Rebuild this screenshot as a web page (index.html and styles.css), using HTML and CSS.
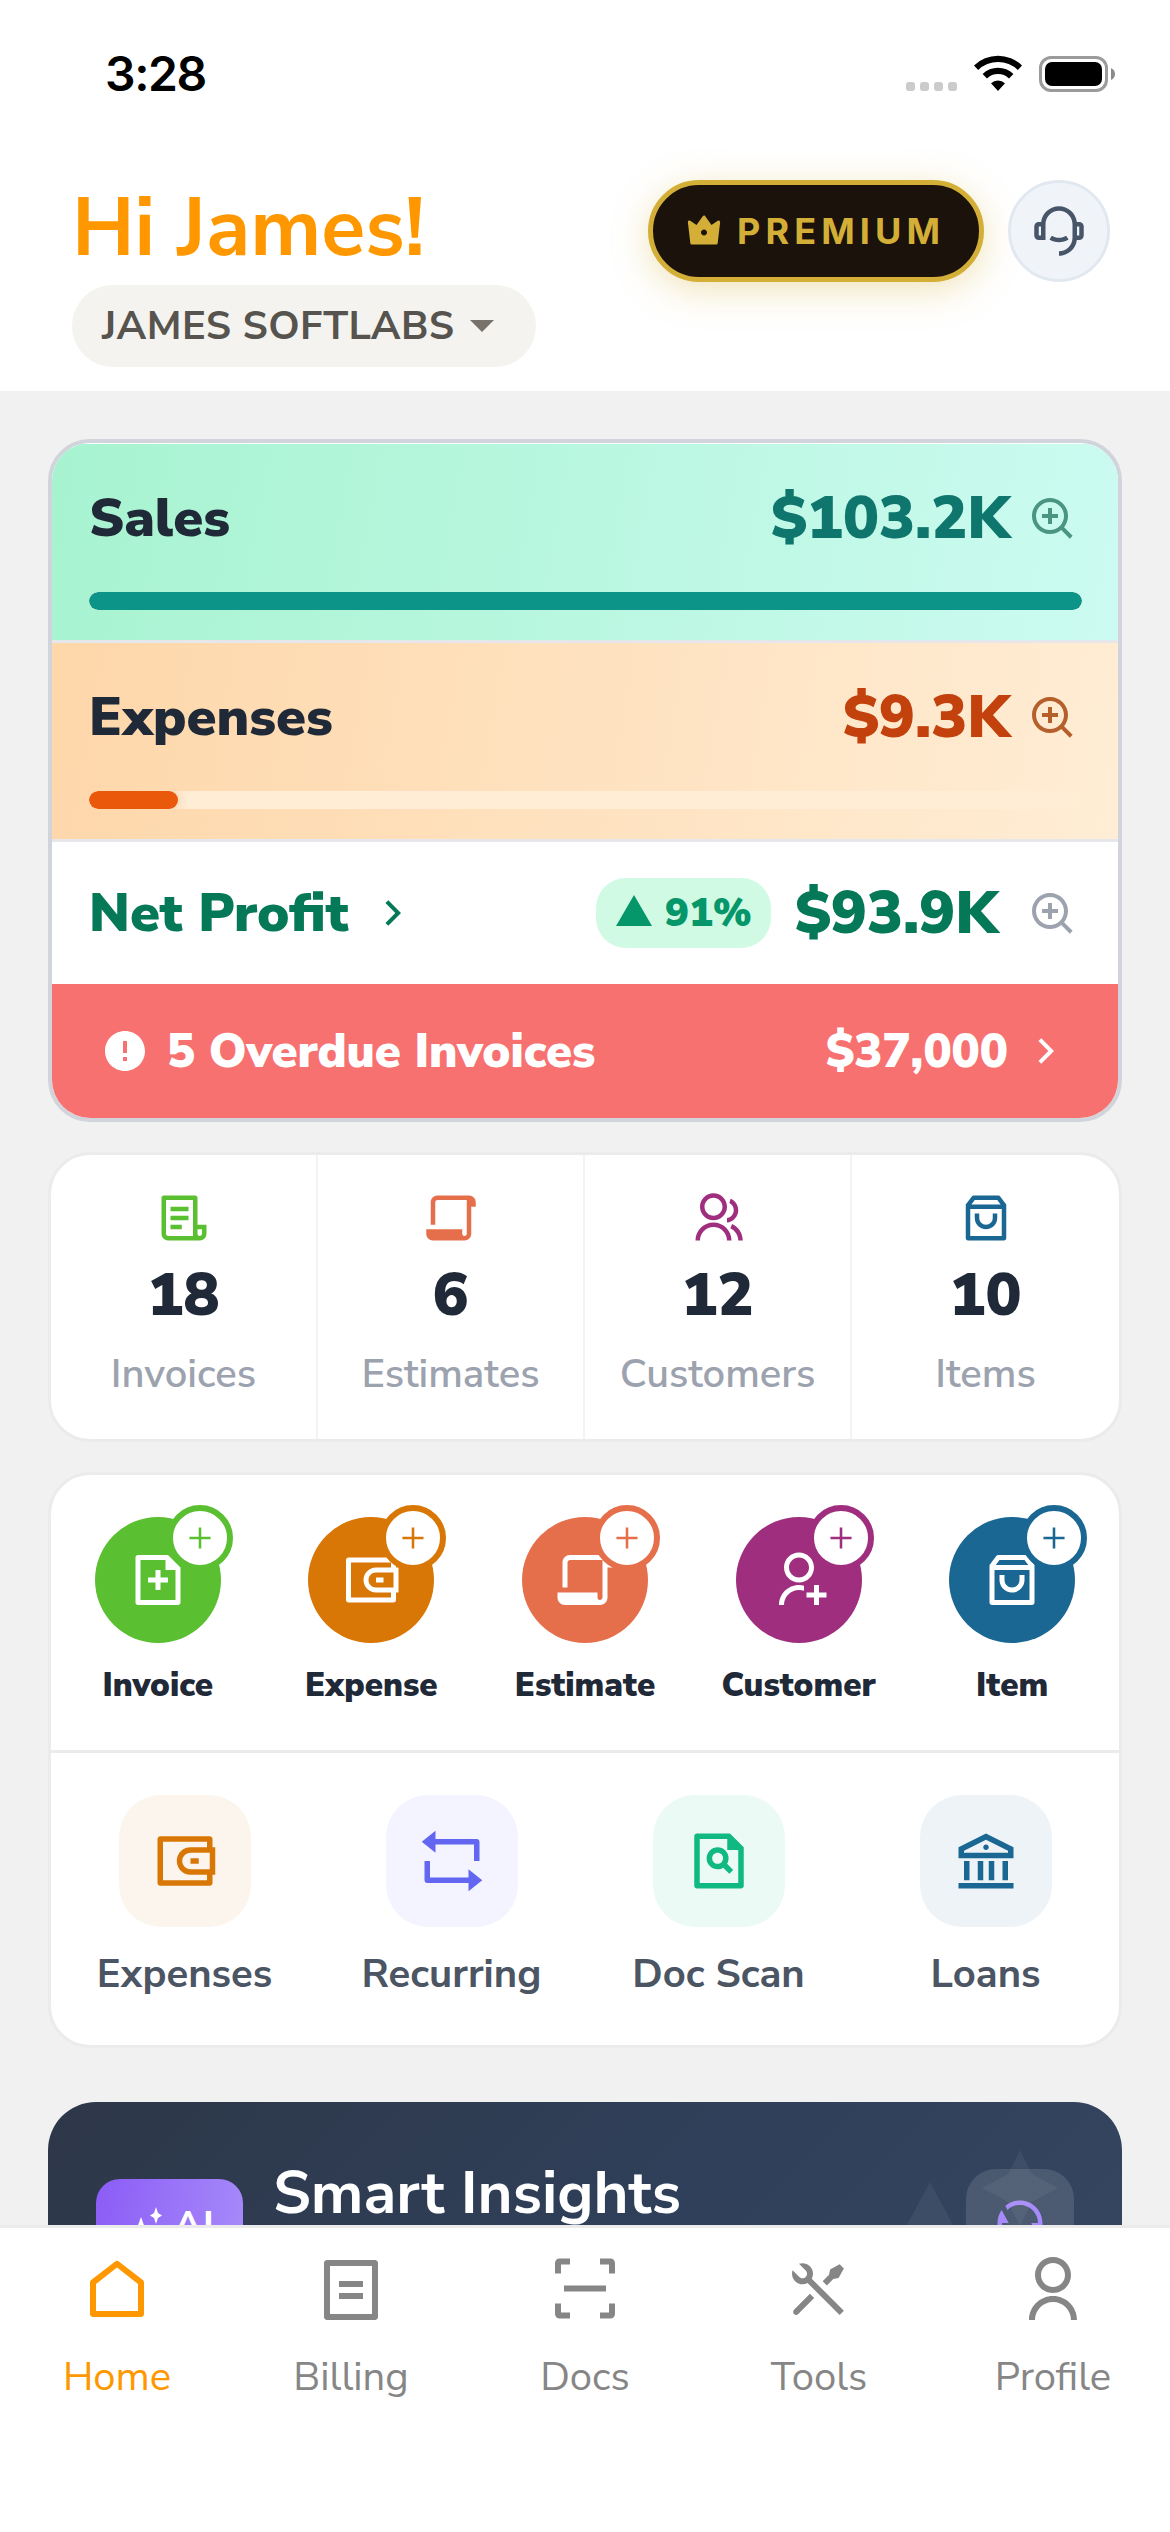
FILE: index.html
```html
<!DOCTYPE html>
<html lang="en">
<head>
  <meta charset="UTF-8">
  <meta name="viewport" content="width=device-width, initial-scale=1.0">
  <title>Home</title>
  <link rel="stylesheet" href="styles.css">
</head>
<body>
  <!-- shared icons -->
  <svg width="0" height="0" class="defs">
    <symbol id="i-zoom" viewBox="0 0 24 24"><path d="M18.031 16.6168L22.3137 20.8995L20.8995 22.3137L16.6168 18.031C15.0769 19.263 13.124 20 11 20C6.032 20 2 15.968 2 11C2 6.032 6.032 2 11 2C15.968 2 20 6.032 20 11C20 13.124 19.263 15.0769 18.031 16.6168ZM16.0247 15.8748C17.2475 14.6146 18 12.8956 18 11C18 7.1325 14.8675 4 11 4C7.1325 4 4 7.1325 4 11C4 14.8675 7.1325 18 11 18C12.8956 18 14.6146 17.2475 15.8748 16.0247L16.0247 15.8748ZM10 10V7H12V10H15V12H12V15H10V12H7V10H10Z"/></symbol>
    <symbol id="i-right" viewBox="0 0 24 24"><path d="M13.1717 12.0007L8.22192 7.05093L9.63614 5.63672L16.0001 12.0007L9.63614 18.3646L8.22192 16.9504L13.1717 12.0007Z"/></symbol>
    <symbol id="i-scroll" viewBox="0 0 24 24"><path d="M6 2H20C21.6569 2 23 3.34315 23 5V7H21V19C21 20.6569 19.6569 22 18 22H4C2.34315 22 1 20.6569 1 19V17H17V19C17 19.5128 17.386 19.9355 17.8834 19.9933L18 20C18.5128 20 18.9355 19.614 18.9933 19.1166L19 19V4H6C5.48716 4 5.06449 4.38604 5.00673 4.88338L5 5V15H3V5C3 3.34315 4.34315 2 6 2Z"/></symbol>
    <symbol id="i-bag" viewBox="0 0 24 24"><path d="M6.5 2H17.5C17.8147 2 18.1111 2.14819 18.3 2.4L21 6V21C21 21.5523 20.5523 22 20 22H4C3.44772 22 3 21.5523 3 21V6L5.7 2.4C5.88886 2.14819 6.18525 2 6.5 2ZM19 8H5V20H19V8ZM18.5 6L17 4H7L5.5 6H18.5ZM9 10V12C9 13.6569 10.3431 15 12 15C13.6569 15 15 13.6569 15 12V10H17V12C17 14.7614 14.7614 17 12 17C9.23858 17 7 14.7614 7 12V10H9Z"/></symbol>
    <symbol id="i-wallet" viewBox="0 0 24 24"><path d="M22 7H23V17H22V20C22 20.5523 21.5523 21 21 21H3C2.44772 21 2 20.5523 2 20V4C2 3.44772 2.44772 3 3 3H21C21.5523 3 22 3.44772 22 4V7ZM20 17H14C11.2386 17 9 14.7614 9 12C9 9.23858 11.2386 7 14 7H20V5H4V19H20V17ZM21 15V9H14C12.3431 9 11 10.3431 11 12C11 13.6569 12.3431 15 14 15H21ZM14 11H17V13H14V11Z"/></symbol>
    <symbol id="i-plus" viewBox="0 0 24 24"><path d="M10.6 0.5H13.4V10.6H23.5V13.4H13.4V23.5H10.6V13.4H0.5V10.6H10.6Z"/></symbol>
  </svg>

  <div class="app">
    <div class="status-bar">
      <span class="time">3:28</span>
      <div class="status-icons">
        <div class="dots"><i></i><i></i><i></i><i></i></div>
        <svg class="wifi" viewBox="0 0 48 36"><path d="M0 10.5A34.5 34.5 0 0 1 48 10.5L43.8 15A28.300 28.300 0 0 0 4.200 15Z M8.600 19A22 22 0 0 1 39.400 19L35 23.400A15.800 15.800 0 0 0 13 23.400Z M17 28.200A10.600 10.600 0 0 1 31 28.200L24 36Z"/></svg>
        <div class="battery"><div class="battery-level"></div></div>
        <svg class="battery-cap" viewBox="0 0 4 12"><path d="M0 0Q4 2 4 6Q4 10 0 12Z"/></svg>
      </div>
    </div>

    <header>
      <div class="greeting">
        <h1>Hi James!</h1>
        <div class="company">
          <span>JAMES SOFTLABS</span>
          <svg viewBox="0 0 24 24"><path d="M12 16L6 10H18L12 16Z"/></svg>
        </div>
      </div>
      <div class="header-actions">
        <div class="premium">
          <svg viewBox="0 0 24 24"><path d="M2.80577 5.20006L7.00505 7.99958L11.1913 2.13881C11.5123 1.68942 12.1369 1.58531 12.5863 1.90631C12.6761 1.97045 12.7546 2.04901 12.8188 2.13881L17.0051 7.99958L21.2043 5.20006C21.6639 4.89371 22.2847 5.01788 22.5911 5.47741C22.7228 5.67503 22.7799 5.91308 22.7522 6.14895L21.109 20.1164C21.0497 20.62 20.6229 20.9996 20.1158 20.9996H3.8943C3.38722 20.9996 2.9604 20.62 2.90115 20.1164L1.25792 6.14895C1.19339 5.60045 1.58573 5.10349 2.13423 5.03896C2.37011 5.01121 2.60816 5.06832 2.80577 5.20006ZM12.0051 14.9996C13.1096 14.9996 14.0051 14.1042 14.0051 12.9996C14.0051 11.895 13.1096 10.9996 12.0051 10.9996C10.9005 10.9996 10.0051 11.895 10.0051 12.9996C10.0051 14.1042 10.9005 14.9996 12.0051 14.9996Z"/></svg>
          <span>PREMIUM</span>
        </div>
        <div class="support">
          <svg viewBox="0 0 24 24"><path d="M19.9381 8H21C22.1046 8 23 8.89543 23 10V14C23 15.1046 22.1046 16 21 16H19.9381C19.446 19.9463 16.0796 23 12 23V21C15.3137 21 18 18.3137 18 15V9C18 5.68629 15.3137 3 12 3C8.68629 3 6 5.68629 6 9V16H3C1.89543 16 1 15.1046 1 14V10C1 8.89543 1.89543 8 3 8H4.06189C4.55399 4.05369 7.92038 1 12 1C16.0796 1 19.446 4.05369 19.9381 8ZM3 10V14H4V10H3ZM20 10V14H21V10H20ZM7.75944 15.7849L8.81958 14.0887C9.74161 14.6662 10.8318 15 12 15C13.1682 15 14.2584 14.6662 15.1804 14.0887L16.2406 15.7849C15.0112 16.5549 13.5576 17 12 17C10.4424 17 8.98882 16.5549 7.75944 15.7849Z"/></svg>
        </div>
      </div>
    </header>

    <main>
      <section class="summary">
        <div class="money sales">
          <div class="money-row">
            <span class="label">Sales</span>
            <span class="amount">$103.2K</span>
            <svg class="zoom"><use href="#i-zoom"/></svg>
          </div>
          <div class="track"><div class="fill" style="width: 100%"></div></div>
        </div>
        <div class="money expenses">
          <div class="money-row">
            <span class="label">Expenses</span>
            <span class="amount">$9.3K</span>
            <svg class="zoom"><use href="#i-zoom"/></svg>
          </div>
          <div class="track"><div class="fill" style="width: 9%"></div></div>
        </div>
        <div class="profit">
          <span class="label">Net Profit</span>
          <svg class="chevron"><use href="#i-right"/></svg>
          <span class="badge">
            <svg viewBox="0 0 36 31"><path d="M18 0L36 31H0Z"/></svg>
            <b>91%</b>
          </span>
          <span class="amount">$93.9K</span>
          <svg class="zoom"><use href="#i-zoom"/></svg>
        </div>
        <div class="overdue">
          <svg class="warn" viewBox="0 0 24 24"><path d="M12 22C6.47715 22 2 17.5228 2 12C2 6.47715 6.47715 2 12 2C17.5228 2 22 6.47715 22 12C22 17.5228 17.5228 22 12 22ZM11 15V17H13V15H11ZM11 7V13H13V7H11Z"/></svg>
          <span class="overdue-text">5 Overdue Invoices</span>
          <span class="overdue-sum">$37,000</span>
          <svg class="chevron"><use href="#i-right"/></svg>
        </div>
      </section>

      <section class="card stats">
        <div class="stat green">
          <svg viewBox="0 0 24 24"><path fill-rule="evenodd" d="M19 22H5C3.34315 22 2 20.6569 2 19V3C2 2.44772 2.44772 2 3 2H17C17.5523 2 18 2.44772 18 3V15H22V19C22 20.6569 20.6569 22 19 22ZM18 17V19C18 19.5523 18.4477 20 19 20C19.5523 20 20 19.5523 20 19V17H18ZM16 20V4H4V19C4 19.5523 4.44772 20 5 20H16ZM6 7H14V9H6V7ZM6 11H14V13H6V11ZM6 15H11V17H6V15Z"/></svg>
          <strong>18</strong>
          <span>Invoices</span>
        </div>
        <div class="stat coral">
          <svg><use href="#i-scroll"/></svg>
          <strong>6</strong>
          <span>Estimates</span>
        </div>
        <div class="stat purple">
          <svg viewBox="0 0 24 24"><path d="M2 22C2 17.5817 5.58172 14 10 14C14.4183 14 18 17.5817 18 22H16C16 18.6863 13.3137 16 10 16C6.68629 16 4 18.6863 4 22H2ZM10 13C6.685 13 4 10.315 4 7C4 3.685 6.685 1 10 1C13.315 1 16 3.685 16 7C16 10.315 13.315 13 10 13ZM10 11C12.21 11 14 9.21 14 7C14 4.79 12.21 3 10 3C7.79 3 6 4.79 6 7C6 9.21 7.79 11 10 11ZM18.2837 14.7028C21.0644 15.9561 23 18.752 23 22H21C21 19.564 19.5483 17.4671 17.4628 16.5271L18.2837 14.7028ZM17.5962 3.41321C19.5944 4.23703 21 6.20361 21 8.5C21 11.3702 18.8042 13.7252 16 13.9776V11.9646C17.6967 11.7222 19 10.264 19 8.5C19 7.11935 18.2016 5.92603 17.0412 5.35635L17.5962 3.41321Z"/></svg>
          <strong>12</strong>
          <span>Customers</span>
        </div>
        <div class="stat blue">
          <svg><use href="#i-bag"/></svg>
          <strong>10</strong>
          <span>Items</span>
        </div>
      </section>

      <section class="card actions">
        <div class="quick">
          <div class="create green">
            <div class="circle">
              <svg class="icon" viewBox="0 0 24 24"><path d="M15 4H5V20H19V8H15V4ZM3 2.9918C3 2.44405 3.44749 2 3.9985 2H16L20.9997 7L21 20.9925C21 21.5489 20.5551 22 20.0066 22H3.9934C3.44476 22 3 21.5447 3 21.0082V2.9918ZM11 11V8H13V11H16V13H13V16H11V13H8V11H11Z"/></svg>
              <div class="plus"><svg><use href="#i-plus"/></svg></div>
            </div>
            <span>Invoice</span>
          </div>
          <div class="create amber">
            <div class="circle">
              <svg class="icon"><use href="#i-wallet"/></svg>
              <div class="plus"><svg><use href="#i-plus"/></svg></div>
            </div>
            <span>Expense</span>
          </div>
          <div class="create coral">
            <div class="circle">
              <svg class="icon"><use href="#i-scroll"/></svg>
              <div class="plus"><svg><use href="#i-plus"/></svg></div>
            </div>
            <span>Estimate</span>
          </div>
          <div class="create purple">
            <div class="circle">
              <svg class="icon" viewBox="0 0 24 24"><path d="M14 14.252V16.3414C13.3744 16.1203 12.7013 16 12 16C8.68629 16 6 18.6863 6 22H4C4 17.5817 7.58172 14 12 14C12.6906 14 13.3608 14.0875 14 14.252ZM12 13C8.685 13 6 10.315 6 7C6 3.685 8.685 1 12 1C15.315 1 18 3.685 18 7C18 10.315 15.315 13 12 13ZM12 11C14.21 11 16 9.21 16 7C16 4.79 14.21 3 12 3C9.79 3 8 4.79 8 7C8 9.21 9.79 11 12 11ZM18 17V14H20V17H23V19H20V22H18V19H15V17H18Z"/></svg>
              <div class="plus"><svg><use href="#i-plus"/></svg></div>
            </div>
            <span>Customer</span>
          </div>
          <div class="create blue">
            <div class="circle">
              <svg class="icon"><use href="#i-bag"/></svg>
              <div class="plus"><svg><use href="#i-plus"/></svg></div>
            </div>
            <span>Item</span>
          </div>
        </div>
        <div class="links">
          <div class="link">
            <div class="tile tile-amber"><svg><use href="#i-wallet"/></svg></div>
            <span>Expenses</span>
          </div>
          <div class="link">
            <div class="tile tile-indigo"><svg viewBox="0 0 24 24"><path d="M6 4H21C21.5523 4 22 4.44772 22 5V12H20V6H6V9L1 5L6 1V4ZM18 20H3C2.44772 20 2 19.5523 2 19V12H4V18H18V15L23 19L18 23V20Z"/></svg></div>
            <span>Recurring</span>
          </div>
          <div class="link">
            <div class="tile tile-green"><svg viewBox="0 0 24 24"><path d="M15 4H5V20H19V8H15V4ZM3 2.9918C3 2.44405 3.44749 2 3.9985 2H16L20.9997 7L21 20.9925C21 21.5489 20.5551 22 20.0066 22H3.9934C3.44476 22 3 21.5447 3 21.0082V2.9918ZM13.529 14.4464C11.9951 15.3524 9.98633 15.1464 8.66839 13.8284C7.1063 12.2663 7.1063 9.73367 8.66839 8.17157C10.2305 6.60948 12.7631 6.60948 14.3252 8.17157C15.6432 9.48951 15.8492 11.4983 14.9432 13.0322L17.1537 15.2426L15.7395 16.6569L13.529 14.4464ZM12.911 12.4142C13.6921 11.6332 13.6921 10.3668 12.911 9.58579C12.13 8.80474 10.8637 8.80474 10.0826 9.58579C9.30156 10.3668 9.30156 11.6332 10.0826 12.4142C10.8637 13.1953 12.13 13.1953 12.911 12.4142Z"/></svg></div>
            <span>Doc Scan</span>
          </div>
          <div class="link">
            <div class="tile tile-blue"><svg viewBox="0 0 24 24"><path d="M2 20H22V22H2V20ZM4 12H6V19H4V12ZM9 12H11V19H9V12ZM13 12H15V19H13V12ZM18 12H20V19H18V12ZM2 7L12 2L22 7V11H2V7ZM4 8.23607V9H20V8.23607L12 4.23607L4 8.23607ZM12 8C11.4477 8 11 7.55228 11 7C11 6.44772 11.4477 6 12 6C12.5523 6 13 6.44772 13 7C13 7.55228 12.5523 8 12 8Z"/></svg></div>
            <span>Loans</span>
          </div>
        </div>
      </section>

      <section class="insights">
        <svg class="stars" viewBox="0 0 200 200"><path d="M60 32L98 103L60 174L22 103Z"/><path d="M150 0L162 24L188 38L162 52L150 76L138 52L112 38L138 24Z"/></svg>
        <div class="ai">
          <svg viewBox="0 0 36 36"><path d="M13 10L17 21L28 25L17 29L13 40L9 29L-2 25L9 21ZM28 0L30 6L34 8.500L30 11L28 17L26 11L22 8.500L26 6Z"/></svg>
          <span>AI</span>
        </div>
        <h2>Smart Insights</h2>
        <div class="refresh">
          <svg viewBox="0 0 24 24"><path d="M5.46257 4.43262C7.21556 2.91688 9.5007 2 12 2C17.5228 2 22 6.47715 22 12C22 14.1361 21.3302 16.1158 20.1892 17.7406L17 12H20C20 7.58172 16.4183 4 12 4C9.84982 4 7.89777 4.84827 6.46023 6.22842L5.46257 4.43262ZM18.5374 19.5674C16.7844 21.0831 14.4993 22 12 22C6.47715 22 2 17.5228 2 12C2 9.86386 2.66979 7.88416 3.8108 6.25944L7 12H4C4 16.4183 7.58172 20 12 20C14.1502 20 16.1022 19.1517 17.5398 17.7716L18.5374 19.5674Z"/></svg>
        </div>
      </section>
    </main>

    <nav>
      <a class="active">
        <svg viewBox="0 0 24 24"><path d="M21 20C21 20.5523 20.5523 21 20 21H4C3.44772 21 3 20.5523 3 20V9.48907C3 9.18048 3.14247 8.88917 3.38606 8.69972L11.3861 2.47749C11.7472 2.19663 12.2528 2.19663 12.6139 2.47749L20.6139 8.69972C20.8575 8.88917 21 9.18048 21 9.48907V20ZM19 19V9.97815L12 4.53371L5 9.97815V19H19Z"/></svg>
        <span>Home</span>
      </a>
      <a>
        <svg viewBox="0 0 24 24"><path d="M20 22H4C3.44772 22 3 21.5523 3 21V3C3 2.44772 3.44772 2 4 2H20C20.5523 2 21 2.44772 21 3V21C21 21.5523 20.5523 22 20 22ZM19 20V4H5V20H19ZM8 9H16V11H8V9ZM8 13H16V15H8V13Z"/></svg>
        <span>Billing</span>
      </a>
      <a>
        <svg viewBox="0 0 24 24"><path d="M7 1.500V3.500H4V6.500H2V3C2 2.172 2.672 1.500 3.500 1.500ZM17 1.500H20.500C21.328 1.500 22 2.172 22 3V6.500H20V3.500H17ZM2 16.500H4V19.500H7V21.500H3.500C2.672 21.500 2 20.828 2 20ZM20 16.500H22V20C22 20.828 21.328 21.500 20.500 21.500H17V19.500H20ZM5 10.500H19V12.500H5Z"/></svg>
        <span>Docs</span>
      </a>
      <a>
        <svg viewBox="0 0 24 24"><path d="M5.32943 3.27158C6.56252 2.8332 7.9923 3.10749 8.97927 4.09446C10.1002 5.21537 10.3019 6.90741 9.5843 8.23385L20.293 18.9437L18.8788 20.3579L8.16982 9.64875C6.84325 10.3669 5.15069 10.1654 4.02952 9.04421C3.04227 8.05696 2.7681 6.62665 3.20701 5.39332L5.44373 7.63C6.02952 8.21578 6.97927 8.21578 7.56505 7.63C8.15084 7.04421 8.15084 6.09446 7.56505 5.50868L5.32943 3.27158ZM15.6968 5.15512L18.8788 3.38736L20.293 4.80157L18.5252 7.98355L16.7574 8.3371L14.6361 10.4584L13.2219 9.04421L15.3432 6.92289L15.6968 5.15512ZM8.97927 13.2868L10.3935 14.7011L5.09018 20.0044C4.69966 20.3949 4.06649 20.3949 3.67597 20.0044C3.31334 19.6417 3.28744 19.0699 3.59826 18.6774L3.67597 18.5902L8.97927 13.2868Z"/></svg>
        <span>Tools</span>
      </a>
      <a>
        <svg viewBox="0 0 24 24"><path d="M4 22C4 17.5817 7.58172 14 12 14C16.4183 14 20 17.5817 20 22H18C18 18.6863 15.3137 16 12 16C8.68629 16 6 18.6863 6 22H4ZM12 13C8.685 13 6 10.315 6 7C6 3.685 8.685 1 12 1C15.315 1 18 3.685 18 7C18 10.315 15.315 13 12 13ZM12 11C14.21 11 16 9.21 16 7C16 4.79 14.21 3 12 3C9.79 3 8 4.79 8 7C8 9.21 9.79 11 12 11Z"/></svg>
        <span>Profile</span>
      </a>
    </nav>
  </div>
</body>
</html>
```
FILE: styles.css
```css
* {
  box-sizing: border-box;
}
body {
  margin: 0;
  font-family: "Nunito Sans", Nunito, Lato, sans-serif;
  background-color: #f1f1f1;
  color: #1f2937;
}
svg {
  display: block;
  fill: currentColor;
  flex-shrink: 0;
}
.defs {
  position: absolute;
}
.app {
  display: flex;
  flex-direction: column;
  width: 1170px;
  height: 2532px;
  overflow: hidden;
}
.green { color: #5bbf32; }
.amber { color: #d97706; }
.coral { color: #e66f4b; }
.purple { color: #9f2e7e; }
.blue { color: #1a6793; }

/* status bar */
.status-bar {
  display: flex;
  justify-content: space-between;
  height: 141px;
  padding: 55px 55px 0 105px;
  background: white;
  color: black;
}
.time {
  font-family: Inter, sans-serif;
  font-size: 48px;
  font-weight: 600;
  line-height: 38px;
  letter-spacing: -1.4px;
}
.status-icons {
  display: flex;
  height: 37px;
}
.dots {
  display: flex;
  gap: 5px;
  margin: 27px 17px 0 0;
}
.dots i {
  width: 9px;
  height: 9px;
  border-radius: 3px;
  background: #cbcbcb;
}
.wifi {
  width: 48px;
  height: 36px;
}
.battery {
  width: 69px;
  height: 36px;
  margin: 1px 3px 0 17px;
  padding: 3px;
  border: 3px solid #9b9b9b;
  border-radius: 12px;
}
.battery-level {
  height: 100%;
  border-radius: 7px;
  background: black;
}
.battery-cap {
  width: 4px;
  height: 12px;
  margin-top: 13px;
  color: #8a8a8a;
}

/* header */
header {
  display: flex;
  justify-content: space-between;
  height: 250px;
  padding: 39px 60px 0 72px;
  background: white;
}
h1 {
  margin: 0;
  height: 105px;
  color: #ff9800;
  font-size: 81px;
  font-weight: 700;
  line-height: 97px;
}
.company {
  display: flex;
  align-items: center;
  justify-content: space-between;
  width: 464px;
  height: 82px;
  padding: 0 30px;
  border-radius: 41px;
  background: #f4f3ef;
  color: #57534e;
  font-size: 40px;
  font-weight: 700;
  letter-spacing: 0.4px;
}
.company svg {
  width: 48px;
  height: 48px;
  margin-top: -4px;
  color: #78716c;
}
.header-actions {
  display: flex;
  gap: 24px;
}
.premium {
  display: flex;
  align-items: center;
  gap: 15px;
  width: 336px;
  height: 102px;
  padding-left: 33px;
  border: 5px solid #d4af37;
  border-radius: 51px;
  background: #1a120b;
  box-shadow: 0 8px 36px rgba(212, 175, 55, 0.35);
  color: #d4af37;
  font-family: Inter, sans-serif;
  font-size: 36px;
  font-weight: 700;
  letter-spacing: 5.1px;
}
.premium svg {
  width: 36px;
  height: 36px;
}
.support {
  display: flex;
  align-items: center;
  justify-content: center;
  width: 102px;
  height: 102px;
  border: 3px solid #e2e8f0;
  border-radius: 50%;
  background: #f0f4f9;
  color: #475569;
}
.support svg {
  width: 54px;
  height: 54px;
}

main {
  flex: 1;
  min-height: 0;
  padding: 48px 48px 0;
  overflow: hidden;
}

/* sales / expenses / profit */
.summary {
  height: 683px;
  border: 4px solid #d1d5db;
  border-radius: 42px;
  background: white;
  overflow: hidden;
}
.money {
  height: 199px;
  padding: 32px 36px 0 37px;
  border-bottom: 3px solid #e5e7eb;
}
.money-row {
  display: flex;
  align-items: center;
  height: 84px;
}
.sales {
  margin-top: 1px;
  background: linear-gradient(100deg, #a7f3d0, #ccfbf1);
}
.expenses {
  background: linear-gradient(100deg, #fed7aa, #ffedd5);
}
.label {
  font-size: 54px;
  font-weight: 900;
}
.amount {
  font-size: 60px;
  font-weight: 900;
}
.money .amount {
  margin-left: auto;
}
.sales .amount { color: #0f766e; }
.expenses .amount { color: #c2410c; }
.zoom {
  width: 48px;
  height: 48px;
  margin: 0 6px 0 18px;
  color: #9ca3af;
}
.sales .zoom { color: #4a9482; }
.expenses .zoom { color: #b45f2c; }
.track {
  height: 18px;
  margin-top: 32px;
  border-radius: 9px;
  background: #ffedd5;
  overflow: hidden;
}
.fill {
  height: 100%;
  border-radius: 9px;
}
.sales .fill {
  background: #0d9488;
}
.expenses .fill {
  background: #ea580c;
  box-shadow: 0 0 12px rgba(234, 88, 12, 0.3);
}
.profit {
  display: flex;
  align-items: center;
  height: 142px;
  padding: 0 36px 0 37px;
  color: #047857;
}
.chevron {
  width: 48px;
  height: 48px;
}
.profit .chevron {
  margin-left: 20px;
}
.badge {
  display: flex;
  align-items: center;
  width: 175px;
  height: 70px;
  margin: 0 24px 0 auto;
  padding-left: 20px;
  gap: 13px;
  border-radius: 30px;
  background: #d1fae5;
  color: #059669;
  font-size: 40px;
}
.badge b {
  font-weight: 900;
}
.badge svg {
  width: 36px;
  height: 31px;
  margin-top: -6px;
}
.profit .zoom {
  margin-left: 30px;
}
.overdue {
  display: flex;
  align-items: center;
  height: 134px;
  padding: 0 48px 0 49px;
  background: #f87171;
  color: white;
  font-size: 47px;
  font-weight: 900;
}
.warn {
  width: 48px;
  height: 48px;
  margin-right: 18px;
}
.overdue-sum {
  margin: 0 14px 0 auto;
}

/* cards */
.card {
  margin-top: 30px;
  border: 3px solid #ebebeb;
  border-radius: 42px;
  background: white;
}
.stats {
  display: grid;
  grid-template-columns: repeat(4, 1fr);
  height: 290px;
}
.stat {
  display: flex;
  flex-direction: column;
  align-items: center;
  padding-top: 36px;
  border-right: 2px solid #f1f3f8;
}
.stat:last-child {
  border-right: none;
}
.stat svg {
  width: 54px;
  height: 54px;
}
.stat strong {
  margin-top: 13px;
  color: #1f2937;
  font-size: 60px;
  font-weight: 900;
  line-height: 74px;
}
.stat span {
  margin-top: 18px;
  color: #9ca3af;
  font-size: 40px;
  font-weight: 600;
  line-height: 48px;
}

.actions {
  height: 576px;
}
.quick {
  display: grid;
  grid-template-columns: repeat(5, 1fr);
  height: 278px;
  padding-top: 42px;
  border-bottom: 3px solid #ebebeb;
}
.create, .link {
  display: flex;
  flex-direction: column;
  align-items: center;
}
.circle {
  position: relative;
  display: flex;
  align-items: center;
  justify-content: center;
  width: 126px;
  height: 126px;
  border-radius: 50%;
  background: currentColor;
}
.circle .icon {
  width: 60px;
  height: 60px;
  color: white;
}
.plus {
  position: absolute;
  top: -12px;
  right: -12px;
  display: flex;
  align-items: center;
  justify-content: center;
  width: 66px;
  height: 66px;
  border: 6px solid currentColor;
  border-radius: 50%;
  background: white;
}
.plus svg {
  width: 22px;
  height: 22px;
}
.create span {
  margin-top: 23px;
  color: #1f2937;
  font-size: 33px;
  font-weight: 900;
  line-height: 40px;
}
.links {
  display: grid;
  grid-template-columns: repeat(4, 1fr);
  padding-top: 42px;
}
.tile {
  display: flex;
  align-items: center;
  justify-content: center;
  width: 132px;
  height: 132px;
  border-radius: 42px;
}
.tile svg {
  width: 66px;
  height: 66px;
}
.tile-amber { background: #fcf5ed; color: #d97706; }
.tile-indigo { background: #f3f4ff; color: #6366f1; }
.tile-green { background: #ecfaf5; color: #10b981; }
.tile-blue { background: #edf3f7; color: #1a6793; }
.link span {
  margin-top: 23px;
  color: #4b5563;
  font-size: 40px;
  font-weight: 700;
  line-height: 48px;
}

/* smart insights */
.insights {
  position: relative;
  display: flex;
  align-items: flex-start;
  height: 400px;
  margin-top: 54px;
  padding: 0 48px;
  border-radius: 48px;
  background: linear-gradient(135deg, #2d3748, #30405a 50%, #374863);
  color: white;
}
.stars {
  position: absolute;
  top: 48px;
  right: 52px;
  width: 200px;
  height: 200px;
  color: rgba(255, 255, 255, 0.055);
}
.ai {
  display: flex;
  align-items: flex-start;
  gap: 12px;
  width: 147px;
  height: 90px;
  margin-top: 77px;
  padding: 23px 0 0 32px;
  border-radius: 24px;
  background: linear-gradient(100deg, #8b5cf6, #a78bfa);
  font-size: 40px;
  font-weight: 700;
  line-height: 48px;
}
.ai svg {
  width: 36px;
  height: 36px;
  margin-top: 5px;
  overflow: visible;
}
.ai span {
  margin-left: -3px;
}
.insights h2 {
  margin: 55px 0 0 30px;
  font-size: 60px;
  font-weight: 700;
  line-height: 72px;
}
.refresh {
  display: flex;
  align-items: center;
  justify-content: center;
  width: 108px;
  height: 108px;
  margin: 67px 0 0 auto;
  border-radius: 30px;
  background: rgba(255, 255, 255, 0.12);
  color: #a78bfa;
}
.refresh svg {
  width: 54px;
  height: 54px;
}

/* bottom nav */
nav {
  display: grid;
  grid-template-columns: repeat(5, 1fr);
  height: 307px;
  padding-top: 26px;
  border-top: 3px solid #ebebeb;
  background: white;
}
nav a {
  display: flex;
  flex-direction: column;
  align-items: center;
  color: #868686;
  font-size: 40px;
  line-height: 48px;
}
nav a.active {
  color: #ff9800;
}
nav svg {
  width: 72px;
  height: 72px;
}
nav span {
  margin-top: 27px;
}
```
